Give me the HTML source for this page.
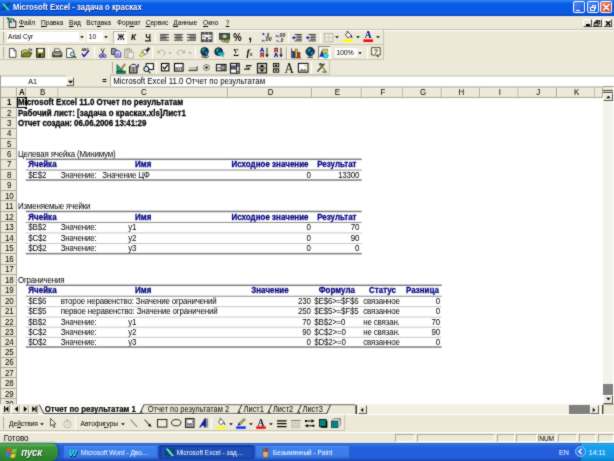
<!DOCTYPE html>
<html lang="ru"><head><meta charset="utf-8"><title>Microsoft Excel - задача о красках</title>
<style>
html,body{margin:0;padding:0;background:#ece9d8;overflow:hidden;}
#scr{filter:url(#soft);position:relative;width:614px;height:461px;overflow:hidden;background:#ece9d8;font-family:"Liberation Sans",sans-serif;font-size:7.95px;color:#000;}
#scr div{position:absolute;box-sizing:border-box;}
#scr svg{position:absolute;overflow:visible;}
.t{white-space:nowrap;line-height:10px;height:10px;letter-spacing:-0.17px;transform:scaleY(1.12);transform-origin:0 55%;}
.b{font-weight:bold;letter-spacing:0.03px;-webkit-text-stroke:0.25px #000;}
.h{font-weight:bold;color:#000080;letter-spacing:0.05px;-webkit-text-stroke:0.25px #000080;}
.m{font-size:6.6px;line-height:9px;height:9px;white-space:nowrap;}
.rh{background:#ece9d8;border-right:1px solid #aca899;border-bottom:1px solid #aca899;text-align:center;line-height:10.4px;font-size:7.95px;}
.ch{background:#ece9d8;border-right:1px solid #aca899;border-bottom:1px solid #aca899;text-align:center;line-height:10px;font-size:7.95px;}
.sep{background:#aca899;border-right:1px solid #fff;}
.hd{border-left:1px solid #fff;border-right:1px solid #aca899;}

</style></head>
<body>
<svg width="0" height="0" style="position:absolute"><defs><filter id="soft" x="0" y="0" width="100%" height="100%" color-interpolation-filters="sRGB"><feConvolveMatrix order="3" kernelMatrix="1 2 1 2 16 2 1 2 1" divisor="28" edgeMode="duplicate" preserveAlpha="true"/></filter></defs></svg>
<div id="scr">
<div style="left:0.00px;top:0.00px;width:614.00px;height:15.60px;background:linear-gradient(to bottom,#1a6cf0 0%,#3a8af8 5%,#1a6eee 12%,#0a5ee6 22%,#0858e2 50%,#0a5ce8 75%,#0a58e0 88%,#0446c4 95%,#023aa8 100%);"></div>
<svg style="left:1.4px;top:3.4px" width="9.4" height="8" viewBox="0 0 9.4 8"><path d="M6.6 0.3 H9.2 V1.1 H8.2 L2.6 7 H0.3 V6.2 H1.2 Z" fill="#0a5c52" stroke="#022" stroke-width="0.3"/><path d="M0.3 0.3 H3 L8.4 6.4 H9.2 V7.4 H6.6 L1.2 1.2 H0.3 Z" fill="#4ae6d6" stroke="#033" stroke-width="0.35"/></svg>
<div class="t" style="left:13.00px;top:2.00px;font-weight:bold;color:#fff;font-size:8.7px;line-height:11px;height:11px;text-shadow:0.5px 0.5px 0 #0a246a;letter-spacing:0;transform:scaleX(0.891);transform-origin:0 0;">Microsoft Excel - задача о красках</div>
<div style="left:572.60px;top:1.40px;width:12.20px;height:12.10px;border-radius:1.8px;border:0.8px solid #fff;background:linear-gradient(135deg,#4c8bf5,#1f56d6);"><div style="left:2.6px;top:7.2px;width:4.2px;height:1.6px;background:#fff"></div></div>
<div style="left:586.50px;top:1.40px;width:12.20px;height:12.10px;border-radius:1.8px;border:0.8px solid #fff;background:linear-gradient(135deg,#4c8bf5,#1f56d6);"><div style="left:4.2px;top:2.6px;width:4.8px;height:4.2px;border:0.8px solid #fff;border-top-width:1.4px"></div><div style="left:2.4px;top:4.6px;width:4.8px;height:4.2px;border:0.8px solid #fff;border-top-width:1.4px;background:#3069e0"></div></div>
<div style="left:600.30px;top:1.40px;width:12.20px;height:12.10px;border-radius:1.8px;border:0.8px solid #fff;background:linear-gradient(135deg,#e88b6c,#c43a1a);"><svg style="left:0;top:0" width="10.6" height="10.5" viewBox="0 0 10.6 10.5"><path d="M2.6 2.6 L8 8 M8 2.6 L2.6 8" stroke="#fff" stroke-width="1.5" stroke-linecap="round"/></svg></div>
<div style="left:0.00px;top:15.50px;width:614.00px;height:14.00px;background:#ece9d8;border-bottom:1px solid #c5c2b2;"></div>
<div style="left:0.00px;top:29.60px;width:614.00px;height:0.80px;background:#fff;"></div>
<div style="left:3.20px;top:17.00px;width:0.90px;height:11.50px;background:#fff;border-right:0.5px solid #aca899;"></div>
<svg style="left:6px;top:17px" width="11" height="12" viewBox="0 0 11 12"><path d="M3.2 2.2 L7.6 2.2 L9.8 4.4 L9.8 10.6 L3.2 10.6 Z" fill="#fff" stroke="#000" stroke-width="0.9"/><path d="M7.4 2.2 V4.6 H9.8" fill="none" stroke="#000" stroke-width="0.7"/><path d="M4.6 7 H8.4 M4.6 8.8 H8.4" stroke="#888" stroke-width="0.5"/><path d="M0.6 0.8 L2.6 0.8 L6.4 5.6 L4.4 5.6 Z" fill="#0a4a44" stroke="#012" stroke-width="0.3"/><path d="M6.2 0.8 L4.4 0.8 L0.8 5.6 L2.6 5.6 Z" fill="#2cc0a8"/></svg>
<div class="m" style="left:19.00px;top:18.20px;"><u>Ф</u>айл</div>
<div class="m" style="left:41.00px;top:18.20px;"><u>П</u>равка</div>
<div class="m" style="left:69.00px;top:18.20px;"><u>В</u>ид</div>
<div class="m" style="left:86.30px;top:18.20px;">Вст<u>а</u>вка</div>
<div class="m" style="left:117.00px;top:18.20px;">Фор<u>м</u>ат</div>
<div class="m" style="left:145.70px;top:18.20px;"><u>С</u>ервис</div>
<div class="m" style="left:173.30px;top:18.20px;"><u>Д</u>анные</div>
<div class="m" style="left:203.00px;top:18.20px;"><u>О</u>кно</div>
<div class="m" style="left:225.70px;top:18.20px;"><u>?</u></div>
<div style="left:583.20px;top:18.60px;width:8.60px;height:8.30px;background:#ece9d8;border-top:0.7px solid #fff;border-left:0.7px solid #fff;border-right:0.9px solid #404040;border-bottom:0.9px solid #404040;"><div style="left:1.4px;top:4.8px;width:4px;height:1.4px;background:#000"></div></div>
<div style="left:592.40px;top:18.60px;width:9.60px;height:8.30px;background:#ece9d8;border-top:0.7px solid #fff;border-left:0.7px solid #fff;border-right:0.9px solid #404040;border-bottom:0.9px solid #404040;"><svg style="left:0;top:0" width="8" height="7" viewBox="0 0 8 7"><rect x="3" y="0.9" width="3.8" height="3" fill="none" stroke="#000" stroke-width="0.8"/><path d="M3 1 H6.8" stroke="#000" stroke-width="1.2"/><rect x="1.2" y="2.8" width="3.8" height="3" fill="#ece9d8" stroke="#000" stroke-width="0.8"/><path d="M1.2 2.9 H5" stroke="#000" stroke-width="1.2"/></svg></div>
<div style="left:602.60px;top:18.60px;width:9.80px;height:8.30px;background:#ece9d8;border-top:0.7px solid #fff;border-left:0.7px solid #fff;border-right:0.9px solid #404040;border-bottom:0.9px solid #404040;"><svg style="left:0;top:0" width="8" height="7" viewBox="0 0 8 7"><path d="M2 1.2 L6.2 5.6 M6.2 1.2 L2 5.6" stroke="#000" stroke-width="1.4"/></svg></div>
<div style="left:0.00px;top:30.40px;width:383.50px;height:14.20px;border-right:1px solid #c8c5b4;border-bottom:1px solid #c8c5b4;"></div>
<div style="left:3.40px;top:32.40px;width:0.90px;height:10.20px;background:#fff;border-right:0.5px solid #aca899;"></div>
<div style="left:0.00px;top:45.00px;width:383.50px;height:15.00px;border-right:1px solid #c8c5b4;border-bottom:1px solid #c8c5b4;"></div>
<div style="left:3.40px;top:47.00px;width:0.90px;height:11.00px;background:#fff;border-right:0.5px solid #aca899;"></div>
<div style="left:109.60px;top:60.40px;width:220.00px;height:15.00px;border-right:1px solid #c8c5b4;border-bottom:1px solid #c8c5b4;"></div>
<div style="left:111.60px;top:62.40px;width:0.90px;height:11.00px;background:#fff;border-right:0.5px solid #aca899;"></div>
<div style="left:6.50px;top:31.60px;width:78.20px;height:10.20px;background:#fff;"></div>
<div style="left:78.60px;top:32.20px;width:5.80px;height:9.00px;background:#f1efe2;"></div>
<div class="m" style="left:8.00px;top:32.40px;">Arial Cyr</div>
<svg style="left:79.50px;top:36.20px" width="4" height="2.4" viewBox="0 0 4 2.4"><path d="M0.2 0.2 H3.8 L2 2.2 Z" fill="#000"/></svg>
<div style="left:87.00px;top:31.60px;width:22.30px;height:10.20px;background:#fff;"></div>
<div style="left:103.40px;top:32.20px;width:5.60px;height:9.00px;background:#f1efe2;"></div>
<div class="m" style="left:88.80px;top:32.40px;">10</div>
<svg style="left:104.20px;top:36.20px" width="4" height="2.4" viewBox="0 0 4 2.4"><path d="M0.2 0.2 H3.8 L2 2.2 Z" fill="#000"/></svg>
<div style="left:113.00px;top:31.00px;width:13.60px;height:12.60px;background:#f8f7f2;border-top:0.8px solid #b9b6a6;border-left:0.8px solid #b9b6a6;border-right:0.8px solid #fff;border-bottom:0.8px solid #fff;"></div>
<div class="t" style="left:117.40px;top:33.40px;font-weight:bold;font-size:7.6px;line-height:10px;height:10px;">Ж</div>
<div class="t" style="left:131.00px;top:33.20px;font-weight:bold;font-style:italic;font-size:8px;line-height:10px;height:10px;">К</div>
<div class="t" style="left:145.40px;top:33.00px;font-weight:bold;font-size:7.6px;line-height:10px;height:8.4px;border-bottom:0.9px solid #000;">Ч</div>
<div style="left:154.50px;top:32.40px;width:1.40px;height:10.60px;background:#aca899;border-right:0.7px solid #fff;"></div>
<svg style="left:160.00px;top:33.90px" width="9" height="8" viewBox="0 0 9 8"><rect x="0.00" y="0.00" width="9" height="1.12" fill="#505050"/><rect x="0.00" y="1.42" width="6.5" height="1.12" fill="#505050"/><rect x="0.00" y="2.84" width="9" height="1.12" fill="#505050"/><rect x="0.00" y="4.26" width="6.5" height="1.12" fill="#505050"/><rect x="0.00" y="5.68" width="9" height="1.12" fill="#505050"/></svg>
<svg style="left:174.00px;top:33.90px" width="9" height="8" viewBox="0 0 9 8"><rect x="0.00" y="0.00" width="9" height="1.12" fill="#505050"/><rect x="1.50" y="1.42" width="6" height="1.12" fill="#505050"/><rect x="0.00" y="2.84" width="9" height="1.12" fill="#505050"/><rect x="1.50" y="4.26" width="6" height="1.12" fill="#505050"/><rect x="0.00" y="5.68" width="9" height="1.12" fill="#505050"/></svg>
<svg style="left:187.20px;top:33.90px" width="9" height="8" viewBox="0 0 9 8"><rect x="0.00" y="0.00" width="9" height="1.12" fill="#505050"/><rect x="2.50" y="1.42" width="6.5" height="1.12" fill="#505050"/><rect x="0.00" y="2.84" width="9" height="1.12" fill="#505050"/><rect x="2.50" y="4.26" width="6.5" height="1.12" fill="#505050"/><rect x="0.00" y="5.68" width="9" height="1.12" fill="#505050"/></svg>
<svg style="left:200.60px;top:32.40px" width="11.4" height="10" viewBox="0 0 11.4 10"><rect x="0.4" y="0.4" width="10.6" height="9.2" fill="#fff" stroke="#222" stroke-width="0.9"/><rect x="0.4" y="0.4" width="10.6" height="2.4" fill="#555"/><rect x="0.4" y="7.2" width="10.6" height="2.4" fill="#555"/><path d="M3.8 0.4 V2.8 M7.6 0.4 V2.8 M3.8 7.2 V9.6 M7.6 7.2 V9.6" stroke="#ddd" stroke-width="0.6"/><path d="M1.4 5 H4.2 M10.6 5 H7.8" stroke="#222" stroke-width="0.8"/><text x="6" y="6.6" font-size="4.4" font-family="Liberation Sans,sans-serif" font-weight="bold" text-anchor="middle" fill="#000">a</text></svg>
<div style="left:214.50px;top:32.40px;width:1.40px;height:10.60px;background:#aca899;border-right:0.7px solid #fff;"></div>
<svg style="left:218.60px;top:32.60px" width="11.4" height="9.6" viewBox="0 0 11.4 9.6"><rect x="0.6" y="0.6" width="10" height="5.6" fill="#4a5a4a" stroke="#222" stroke-width="0.8"/><ellipse cx="5.6" cy="3.4" rx="2" ry="1.7" fill="#bdb"/><ellipse cx="4.6" cy="7.6" rx="2.2" ry="1.2" fill="#cc3" stroke="#222" stroke-width="0.6"/><ellipse cx="8" cy="8.2" rx="2.2" ry="1.2" fill="#cc3" stroke="#222" stroke-width="0.6"/></svg>
<div class="t" style="left:233.20px;top:33.40px;font-weight:bold;font-size:9.4px;line-height:10px;height:10px;letter-spacing:0;">%</div>
<div class="t" style="left:248.60px;top:31.20px;font-weight:bold;font-size:12.5px;line-height:10px;height:10px;">,</div>
<svg style="left:261.00px;top:32.60px" width="10" height="10" viewBox="0 0 10 10"><path d="M1.2 1 H3.6 M2.4 0 V2.2" stroke="#00c" stroke-width="0.8"/><path d="M0.6 8.2 H3 L1.8 6.6 Z" fill="#00c"/><text x="3.2" y="8.2" font-size="5.4" font-family="Liberation Sans,sans-serif" font-style="italic" font-weight="bold" fill="#222">,00</text><text x="4.6" y="4.2" font-size="4.6" font-family="Liberation Sans,sans-serif" font-style="italic" font-weight="bold" fill="#222">,0</text></svg>
<svg style="left:274.60px;top:32.60px" width="10" height="10" viewBox="0 0 10 10"><path d="M0.4 3.4 H3 L1.7 1.8 Z" fill="#00c"/><path d="M1.2 8 H3.6" stroke="#00c" stroke-width="0.8"/><text x="3" y="4.4" font-size="5.4" font-family="Liberation Sans,sans-serif" font-style="italic" font-weight="bold" fill="#222">,00</text><text x="4.6" y="8.8" font-size="4.6" font-family="Liberation Sans,sans-serif" font-style="italic" font-weight="bold" fill="#222">,0</text></svg>
<div style="left:287.50px;top:32.40px;width:1.40px;height:10.60px;background:#aca899;border-right:0.7px solid #fff;"></div>
<svg style="left:292.00px;top:33.80px" width="10" height="8" viewBox="0 0 10 8"><rect x="2.6" y="0.00" width="7.2" height="0.95" fill="#333"/><rect x="4.4" y="1.60" width="5.4" height="0.95" fill="#333"/><rect x="4.4" y="3.20" width="5.4" height="0.95" fill="#333"/><rect x="4.4" y="4.80" width="5.4" height="0.95" fill="#333"/><rect x="2.6" y="6.40" width="7.2" height="0.95" fill="#333"/><path d="M0 3.7 L2.4 1.9 V5.5 Z" fill="#00c"/><path d="M2 3.7 H4" stroke="#00c" stroke-width="0.9"/></svg>
<svg style="left:306.00px;top:33.80px" width="10" height="8" viewBox="0 0 10 8"><rect x="2.6" y="0.00" width="7.2" height="0.95" fill="#333"/><rect x="4.4" y="1.60" width="5.4" height="0.95" fill="#333"/><rect x="4.4" y="3.20" width="5.4" height="0.95" fill="#333"/><rect x="4.4" y="4.80" width="5.4" height="0.95" fill="#333"/><rect x="2.6" y="6.40" width="7.2" height="0.95" fill="#333"/><path d="M3.8 3.7 L1.4 1.9 V5.5 Z" fill="#00c"/><path d="M0 3.7 H2" stroke="#00c" stroke-width="0.9"/></svg>
<div style="left:319.50px;top:32.40px;width:1.40px;height:10.60px;background:#aca899;border-right:0.7px solid #fff;"></div>
<svg style="left:324.00px;top:33.00px" width="9.4" height="9.4" viewBox="0 0 9.4 9.4"><rect x="0.5" y="0.5" width="8.4" height="8.4" fill="none" stroke="#b5b2a2" stroke-width="0.9"/><path d="M4.7 0.5 V8.9 M0.5 4.7 H8.9" stroke="#c8c5b6" stroke-width="0.8"/></svg>
<svg style="left:335.40px;top:36.40px" width="4" height="2.4" viewBox="0 0 4 2.4"><path d="M0.2 0.2 H3.8 L2 2.2 Z" fill="#000"/></svg>
<svg style="left:343.20px;top:30.80px" width="10.4" height="11.4" viewBox="0 0 10.4 11.4"><path d="M2.4 3.6 L5.4 1.2 L8.4 4.4 L5 7 Z" fill="#fff" stroke="#222" stroke-width="0.8"/><path d="M3.4 1.2 C3.4 -0.2 5.6 -0.2 5.4 2" fill="none" stroke="#222" stroke-width="0.7"/><path d="M8 4.2 C9.4 4.6 9.4 6.4 9 7.4 C8.2 6.6 7.6 5.4 8 4.2Z" fill="#00a"/><rect x="0.4" y="8.4" width="9.6" height="2.6" fill="#ff0"/></svg>
<svg style="left:355.60px;top:36.40px" width="4" height="2.4" viewBox="0 0 4 2.4"><path d="M0.2 0.2 H3.8 L2 2.2 Z" fill="#000"/></svg>
<svg style="left:363.00px;top:30.80px" width="10.4" height="11.4" viewBox="0 0 10.4 11.4"><text x="5.2" y="7.4" font-size="9.4" font-family="Liberation Serif,serif" font-weight="bold" text-anchor="middle" fill="#000080">A</text><rect x="0.4" y="8.4" width="9.6" height="2.6" fill="#f00"/></svg>
<svg style="left:376.00px;top:36.40px" width="4" height="2.4" viewBox="0 0 4 2.4"><path d="M0.2 0.2 H3.8 L2 2.2 Z" fill="#000"/></svg>
<svg style="left:8.80px;top:47.80px" width="7.6" height="10" viewBox="0 0 7.6 10"><path d="M0.5 0.5 H4.8 L7 2.8 V9.4 H0.5 Z" fill="#fff" stroke="#222" stroke-width="0.8"/><path d="M4.8 0.5 V2.8 H7" fill="none" stroke="#222" stroke-width="0.7"/></svg>
<svg style="left:20.60px;top:48.00px" width="11.6" height="9.6" viewBox="0 0 11.6 9.6"><path d="M0.5 9 V3 H2 L2.8 2 H5.4 L6.2 3 H8.6 V4.6" fill="#e8e070" stroke="#222" stroke-width="0.7"/><path d="M0.5 9 L2.6 4.8 H11 L8.8 9 Z" fill="#8a8a10" stroke="#222" stroke-width="0.7"/><path d="M7 1.6 C8.4 0.2 10 0.6 10.4 2.2 M10.6 0.8 V2.4 H9" fill="none" stroke="#222" stroke-width="0.7"/></svg>
<svg style="left:35.60px;top:47.80px" width="9" height="9.8" viewBox="0 0 9 9.8"><rect x="0.5" y="0.5" width="8" height="8.8" fill="#7a7a10" stroke="#111" stroke-width="0.8"/><rect x="2" y="0.9" width="5" height="3.6" fill="#fff"/><rect x="2.4" y="6" width="4.2" height="3.2" fill="#222"/><rect x="5.2" y="6.6" width="1" height="2" fill="#ddd"/></svg>
<div style="left:47.50px;top:47.00px;width:1.40px;height:11.60px;background:#aca899;border-right:0.7px solid #fff;"></div>
<svg style="left:52.00px;top:47.60px" width="10.4" height="10" viewBox="0 0 10.4 10"><path d="M2.6 4 V0.8 H7 L8 1.8 V4" fill="#fff" stroke="#222" stroke-width="0.7"/><path d="M0.5 7.6 V4.6 L1.8 3.6 H8.8 L9.9 4.6 V7.6 Z" fill="#8a8a8a" stroke="#222" stroke-width="0.7"/><path d="M0.5 7.6 H9.9 V9 H0.5 Z" fill="#555" stroke="#222" stroke-width="0.6"/><rect x="2.6" y="6.4" width="5" height="0.9" fill="#ee3"/></svg>
<svg style="left:65.60px;top:47.60px" width="10.6" height="10.4" viewBox="0 0 10.6 10.4"><path d="M0.6 0.5 H5.6 L7.6 2.6 V9.6 H0.6 Z" fill="#fff" stroke="#222" stroke-width="0.8"/><circle cx="6.4" cy="6.2" r="2.1" fill="#aee" stroke="#222" stroke-width="0.7"/><path d="M8 7.8 L10 10" stroke="#222" stroke-width="1.2"/></svg>
<svg style="left:80.00px;top:47.20px" width="10.4" height="10.6" viewBox="0 0 10.4 10.6"><text x="1.4" y="3.6" font-size="3.6" font-family="Liberation Sans,sans-serif" font-weight="bold" fill="#222">ABC</text><path d="M2 6.6 L4 9.4 L9 3.4" fill="none" stroke="#00a" stroke-width="1.3"/></svg>
<div style="left:93.50px;top:47.00px;width:1.40px;height:11.60px;background:#aca899;border-right:0.7px solid #fff;"></div>
<svg style="left:99.00px;top:47.60px" width="7.4" height="10.4" viewBox="0 0 7.4 10.4"><path d="M2 0.4 L4.6 6 M5.4 0.4 L2.8 6" stroke="#222" stroke-width="0.8"/><circle cx="2" cy="8" r="1.5" fill="none" stroke="#00a" stroke-width="0.9"/><circle cx="5.4" cy="8" r="1.5" fill="none" stroke="#00a" stroke-width="0.9"/></svg>
<svg style="left:110.80px;top:47.80px" width="10.6" height="9.6" viewBox="0 0 10.6 9.6"><path d="M0.5 0.5 H4.2 L5.6 2 V6.4 H0.5 Z" fill="#9a9a9a" stroke="#222" stroke-width="0.8"/><path d="M4 2.8 H8 L9.8 4.6 V9 H4 Z" fill="#fff" stroke="#00a" stroke-width="0.8"/><path d="M5 5.2 H8.6 M5 6.6 H8.6 M5 7.8 H8.6" stroke="#338" stroke-width="0.6"/></svg>
<svg style="left:124.00px;top:47.60px" width="10.4" height="10.4" viewBox="0 0 10.4 10.4"><rect x="0.6" y="1.4" width="7" height="8" fill="#d8d5c6" stroke="#a09d8e" stroke-width="0.8"/><rect x="2.4" y="0.4" width="3.4" height="1.8" fill="#c0bdae" stroke="#a09d8e" stroke-width="0.5"/><rect x="4" y="4.2" width="5.6" height="5.8" fill="#f2f0e6" stroke="#a09d8e" stroke-width="0.7"/></svg>
<svg style="left:138.60px;top:47.40px" width="11.4" height="10.6" viewBox="0 0 11.4 10.6"><path d="M6.6 3.4 L9.4 0.4 L11 1.8 L8.2 4.8 Z" fill="#223" stroke="#111" stroke-width="0.5"/><path d="M3.2 4.4 L5.8 2.4 L8.8 5.4 L6.2 7.6 Z" fill="#fff" stroke="#222" stroke-width="0.7"/><path d="M0.4 8.8 L3 4.8 L5.8 7.8 L2.2 9.8 Z" fill="#ee4" stroke="#664" stroke-width="0.5"/></svg>
<div style="left:151.50px;top:47.00px;width:1.40px;height:11.60px;background:#aca899;border-right:0.7px solid #fff;"></div>
<svg style="left:156.60px;top:49.40px" width="9.4" height="6.4" viewBox="0 0 9.4 6.4"><path d="M1.6 2.8 C3.4 0.6 7 0.6 8 3 C8.6 4.6 7.4 5.8 6 6" fill="none" stroke="#b3b0a0" stroke-width="1"/><path d="M0.4 0.8 V4.2 H3.8 Z" fill="#b3b0a0"/></svg>
<svg style="left:168.40px;top:51.80px" width="4" height="2.4" viewBox="0 0 4 2.4"><path d="M0.2 0.2 H3.8 L2 2.2 Z" fill="#b3b0a0"/></svg>
<svg style="left:176.40px;top:49.40px" width="9.4" height="6.4" viewBox="0 0 9.4 6.4"><path d="M7.8 2.8 C6 0.6 2.4 0.6 1.4 3 C0.8 4.6 2 5.8 3.4 6" fill="none" stroke="#b3b0a0" stroke-width="1"/><path d="M9 0.8 V4.2 H5.6 Z" fill="#b3b0a0"/></svg>
<svg style="left:188.40px;top:51.80px" width="4" height="2.4" viewBox="0 0 4 2.4"><path d="M0.2 0.2 H3.8 L2 2.2 Z" fill="#b3b0a0"/></svg>
<div style="left:194.50px;top:47.00px;width:1.40px;height:11.60px;background:#aca899;border-right:0.7px solid #fff;"></div>
<svg style="left:200.40px;top:47.40px" width="10.6" height="11" viewBox="0 0 10.6 11"><circle cx="4.6" cy="4.4" r="3.8" fill="#10309a" stroke="#012" stroke-width="0.8"/><path d="M1.9999999999999996 2.2 q1.6 -1.6 3 -0.6 q0.6 1.4 -0.8 2 q-0.4 1.6 -1.6 1.2 q-1.2 -1 -0.6 -2.6z" fill="#2a3"/><path d="M5.3999999999999995 5.0 q1.6 -0.4 2.2 0.6 q-0.6 1.8 -2 2 z" fill="#2c2"/><ellipse cx="3.8" cy="9.4" rx="2" ry="1.1" fill="none" stroke="#222" stroke-width="0.8"/><ellipse cx="6.4" cy="9.4" rx="2" ry="1.1" fill="none" stroke="#222" stroke-width="0.8"/></svg>
<svg style="left:214.20px;top:47.40px" width="11.4" height="11" viewBox="0 0 11.4 11"><circle cx="4.6" cy="4.6" r="3.9" fill="#10309a" stroke="#012" stroke-width="0.8"/><path d="M1.9999999999999996 2.3999999999999995 q1.6 -1.6 3 -0.6 q0.6 1.4 -0.8 2 q-0.4 1.6 -1.6 1.2 q-1.2 -1 -0.6 -2.6z" fill="#2a3"/><path d="M5.3999999999999995 5.199999999999999 q1.6 -0.4 2.2 0.6 q-0.6 1.8 -2 2 z" fill="#2c2"/><path d="M4 5.4 H10 V8 H8.4 L9.2 10 L7.6 8 H4 Z" fill="#0cc" stroke="#066" stroke-width="0.4"/></svg>
<div class="t" style="left:233.20px;top:47.20px;font-family:'Liberation Serif',serif;font-size:9.8px;line-height:11px;height:11px;transform:none;">Σ</div>
<div class="t" style="left:246.40px;top:47.20px;font-family:'Liberation Serif',serif;font-weight:bold;font-style:italic;font-size:9.6px;line-height:11px;height:11px;transform:none;">f</div>
<div class="t" style="left:249.80px;top:50.60px;font-family:'Liberation Serif',serif;font-weight:bold;font-style:italic;font-size:5.4px;line-height:6px;height:6px;">x</div>
<svg style="left:260.00px;top:47.40px" width="9.6" height="11" viewBox="0 0 9.6 11"><text x="0" y="4.8" font-size="5.8" font-weight="bold" font-family="Liberation Sans,sans-serif" fill="#0000a0" stroke="#0000a0" stroke-width="0.3">А</text><text x="0" y="10.4" font-size="5.8" font-weight="bold" font-family="Liberation Sans,sans-serif" fill="#900" stroke="#900" stroke-width="0.3">Я</text><path d="M7 0.8 V8.4" stroke="#111" stroke-width="0.9"/><path d="M5.2 7.6 H8.8 L7 10.4 Z" fill="#111"/></svg>
<svg style="left:274.00px;top:47.40px" width="9.6" height="11" viewBox="0 0 9.6 11"><text x="0" y="4.8" font-size="5.8" font-weight="bold" font-family="Liberation Sans,sans-serif" fill="#900" stroke="#900" stroke-width="0.3">Я</text><text x="0" y="10.4" font-size="5.8" font-weight="bold" font-family="Liberation Sans,sans-serif" fill="#0000a0" stroke="#0000a0" stroke-width="0.3">А</text><path d="M7 0.8 V8.4" stroke="#111" stroke-width="0.9"/><path d="M5.2 7.6 H8.8 L7 10.4 Z" fill="#111"/></svg>
<div style="left:286.30px;top:47.00px;width:1.40px;height:11.60px;background:#aca899;border-right:0.7px solid #fff;"></div>
<svg style="left:290.60px;top:47.60px" width="10.4" height="10.4" viewBox="0 0 10.4 10.4"><path d="M0.6 0.4 V9.8 H10" fill="none" stroke="#222" stroke-width="0.8"/><rect x="1.6" y="3.4" width="2.2" height="6" fill="#22b" stroke="#111" stroke-width="0.4"/><rect x="4.2" y="1" width="2.2" height="8.4" fill="#dd2" stroke="#111" stroke-width="0.4"/><rect x="6.8" y="4.4" width="2.2" height="5" fill="#d22" stroke="#111" stroke-width="0.4"/></svg>
<svg style="left:305.00px;top:47.20px" width="10.6" height="11.2" viewBox="0 0 10.6 11.2"><circle cx="5.2" cy="4.6" r="4.2" fill="#10309a" stroke="#012" stroke-width="0.8"/><path d="M2.6 2.3999999999999995 q1.6 -1.6 3 -0.6 q0.6 1.4 -0.8 2 q-0.4 1.6 -1.6 1.2 q-1.2 -1 -0.6 -2.6z" fill="#2a3"/><path d="M6.0 5.199999999999999 q1.6 -0.4 2.2 0.6 q-0.6 1.8 -2 2 z" fill="#2c2"/><path d="M5.2 8.8 V10 M2.6 10.4 H7.8" stroke="#552" stroke-width="1.1"/></svg>
<div style="left:317.60px;top:46.40px;width:13.00px;height:12.60px;background:#f6f5ef;border-top:0.8px solid #8a8778;border-left:0.8px solid #8a8778;border-right:0.8px solid #fff;border-bottom:0.8px solid #fff;"></div>
<svg style="left:319.40px;top:47.60px" width="10.4" height="10.8" viewBox="0 0 10.4 10.8"><path d="M3.6 1.2 L8.6 1.2 L7.6 5.6 L2.6 5.6 Z" fill="#dc3" stroke="#443" stroke-width="0.5"/><circle cx="6.6" cy="7.6" r="2.6" fill="#3de" stroke="#167" stroke-width="0.5"/><path d="M0.6 8.6 L3 3 L4.4 8.6 Z" fill="#22a" stroke="#115" stroke-width="0.4"/></svg>
<div style="left:334.60px;top:48.00px;width:28.80px;height:9.00px;background:#fff;"></div>
<div style="left:357.40px;top:48.40px;width:5.80px;height:8.20px;background:#f1efe2;"></div>
<div class="m" style="left:336.20px;top:48.20px;font-size:7px;letter-spacing:-0.1px;">100%</div>
<svg style="left:358.40px;top:51.80px" width="4" height="2.4" viewBox="0 0 4 2.4"><path d="M0.2 0.2 H3.8 L2 2.2 Z" fill="#000"/></svg>
<div style="left:366.50px;top:47.00px;width:1.40px;height:11.60px;background:#aca899;border-right:0.7px solid #fff;"></div>
<svg style="left:370.60px;top:47.40px" width="10" height="10.8" viewBox="0 0 10 10.8"><path d="M0.6 0.6 H9.2 V8 H6 L7.4 10 L4.6 8 H0.6 Z" fill="#ffc" stroke="#222" stroke-width="0.8"/><text x="4.9" y="7" font-size="7.2" font-weight="bold" font-family="Liberation Sans,sans-serif" text-anchor="middle" fill="#22a">?</text></svg>
<svg style="left:115.60px;top:62.60px" width="10" height="11" viewBox="0 0 10 11"><path d="M0.6 8 H9.4 V10.4 H0.6 Z" fill="#086" stroke="#111" stroke-width="0.5"/><path d="M1 7.6 L1 1.6 L6.6 7.6 Z" fill="#0b9" stroke="#111" stroke-width="0.6"/><path d="M4.6 5.8 L8.4 0.8 L9.4 1.6 L5.8 6.8 Z" fill="#db3" stroke="#222" stroke-width="0.5"/></svg>
<svg style="left:129.00px;top:62.80px" width="10.4" height="10.6" viewBox="0 0 10.4 10.6"><rect x="0.6" y="3.8" width="7.4" height="6.2" fill="#b8b5a6" stroke="#000" stroke-width="1"/><path d="M0.6 3.8 L3 1.4 H6 L8 3.8" fill="#fff" stroke="#000" stroke-width="0.9"/><path d="M2.4 6 H6.2 M2.4 7.8 H6.2 M4.3 4.6 V9.4" stroke="#444" stroke-width="0.6"/><path d="M9.2 1 V4.2" stroke="#00c" stroke-width="1.1"/></svg>
<svg style="left:142.60px;top:62.80px" width="11" height="10.8" viewBox="0 0 11 10.8"><rect x="3.2" y="0.6" width="7.2" height="5.8" fill="#fff" stroke="#000" stroke-width="1"/><circle cx="3.4" cy="6" r="2.6" fill="#cef" stroke="#000" stroke-width="1"/><path d="M5.2 7.8 L7.4 10.2" stroke="#222" stroke-width="1.1"/></svg>
<div style="left:156.10px;top:62.20px;width:1.40px;height:11.80px;background:#aca899;border-right:0.7px solid #fff;"></div>
<svg style="left:161.00px;top:63.40px" width="8.4" height="8.4" viewBox="0 0 8.4 8.4"><rect x="0.5" y="0.5" width="7.4" height="7.4" fill="#fff" stroke="#000" stroke-width="1.1"/><path d="M1.8 3.6 L3.6 6 L6.6 1.8" fill="none" stroke="#000" stroke-width="1.2"/></svg>
<svg style="left:174.00px;top:63.40px" width="9.6" height="8.6" viewBox="0 0 9.6 8.6"><rect x="0.5" y="0.5" width="8.6" height="7.6" fill="#fff" stroke="#000" stroke-width="1.1"/><text x="4.8" y="6.6" font-size="5.6" font-family="Liberation Sans,sans-serif" font-weight="bold" text-anchor="middle" fill="#333">ил</text></svg>
<svg style="left:188.00px;top:66.20px" width="9.4" height="5" viewBox="0 0 9.4 5"><rect x="0.3" y="0.3" width="8.8" height="4.4" fill="#c4c1b2"/><path d="M0.3 4.7 V0.3 H9.1" fill="none" stroke="#fff" stroke-width="0.7"/><path d="M0.3 4.6 H9.1 V0.3" fill="none" stroke="#333" stroke-width="1"/></svg>
<svg style="left:203.00px;top:64.40px" width="7" height="7" viewBox="0 0 7 7"><circle cx="3.5" cy="3.5" r="2.9" fill="#fff" stroke="#555" stroke-width="0.9"/><circle cx="3.5" cy="3.5" r="1.2" fill="#000"/></svg>
<svg style="left:215.60px;top:64.20px" width="10.4" height="7.2" viewBox="0 0 10.4 7.2"><rect x="0.4" y="0.4" width="9.6" height="6.4" fill="#fff" stroke="#000" stroke-width="1"/><text x="2.6" y="5.2" font-size="4.2" font-family="Liberation Sans,sans-serif" fill="#222" text-anchor="middle">ab</text><rect x="5" y="1.4" width="4" height="4.4" fill="#999" stroke="#222" stroke-width="0.6"/></svg>
<svg style="left:229.80px;top:62.60px" width="9.6" height="10.6" viewBox="0 0 9.6 10.6"><rect x="0.4" y="0.4" width="8.8" height="9.8" fill="#fff" stroke="#000" stroke-width="1"/><path d="M0.4 3 H9.2 M0.4 6 H6.6 M6.6 0.4 V10.2" stroke="#000" stroke-width="0.9"/><rect x="1" y="3.4" width="5.2" height="2.2" fill="#447"/><path d="M7.2 1.8 H8.6 M7.2 8.4 H8.6" stroke="#000" stroke-width="0.8"/></svg>
<svg style="left:244.40px;top:64.40px" width="8" height="7" viewBox="0 0 8 7"><path d="M2.4 1.6 H7.6 M0.2 5.2 H5.4" stroke="#111" stroke-width="1.3"/><path d="M2.8 1 V3.6 M5 3.2 V5.8" stroke="#111" stroke-width="1"/></svg>
<svg style="left:257.00px;top:62.80px" width="10" height="10.4" viewBox="0 0 10 10.4"><rect x="0.4" y="0.4" width="9.2" height="9.6" fill="#c8c5b6" stroke="#000" stroke-width="1"/><path d="M5 1.4 L7.4 4 H2.6 Z M5 9 L7.4 6.4 H2.6 Z" fill="#000"/><rect x="1.6" y="4.4" width="6.8" height="1.6" fill="#667"/></svg>
<svg style="left:273.20px;top:63.40px" width="6.2" height="9.6" viewBox="0 0 6.2 9.6"><rect x="0.4" y="0.4" width="5.4" height="3.4" fill="#d8d5c6" stroke="#000" stroke-width="0.9"/><rect x="0.4" y="5.8" width="5.4" height="3.4" fill="#d8d5c6" stroke="#000" stroke-width="0.9"/><path d="M3.1 1 L4.6 3 H1.6 Z M3.1 8.6 L4.6 6.6 H1.6 Z" fill="#000"/></svg>
<div class="t" style="left:284.60px;top:61.60px;font-family:'Liberation Serif',serif;font-size:13px;line-height:13px;height:13px;">A</div>
<svg style="left:298.00px;top:63.00px" width="10.4" height="9.6" viewBox="0 0 10.4 9.6"><rect x="0.4" y="0.4" width="9.6" height="8.8" fill="#fff" stroke="#000" stroke-width="1"/><path d="M1 8.6 L3.6 5.4 L5.4 7 L7 5.8 L9.4 8.6 Z" fill="#777"/><circle cx="7.2" cy="2.8" r="1" fill="#cc2"/></svg>
<div style="left:311.10px;top:62.20px;width:1.40px;height:11.80px;background:#aca899;border-right:0.7px solid #fff;"></div>
<svg style="left:315.60px;top:62.40px" width="11.4" height="11" viewBox="0 0 11.4 11"><path d="M1.4 9.6 L8.4 1.6" stroke="#222" stroke-width="1.3"/><path d="M2.6 2.8 L5 0.8 L7.4 3.6 L6 4.8 Z" fill="#333"/><path d="M3 1.4 L9.6 9" stroke="#883" stroke-width="1.2"/><path d="M6.4 10 H10.8" stroke="#222" stroke-width="1"/></svg>
<div style="left:0.00px;top:76.00px;width:66.00px;height:10.20px;background:#fff;"></div>
<div class="t" style="left:28.30px;top:77.30px;font-size:7.2px;line-height:9.5px;">A1</div>
<div style="left:66.00px;top:76.60px;width:8.40px;height:9.40px;background:#ece9d8;border-top:0.7px solid #fff;border-left:0.7px solid #fff;border-right:0.9px solid #5c5a50;border-bottom:0.9px solid #5c5a50;"><svg style="left:0;top:0" width="7" height="8" viewBox="0 0 7 8"><path d="M1 2.8 H6 L3.5 5.6 Z" fill="#000"/></svg></div>
<div class="t" style="left:102.20px;top:77.00px;font-weight:bold;font-size:7.6px;line-height:9.5px;">=</div>
<div style="left:110.00px;top:76.00px;width:504.00px;height:10.00px;background:#fff;border-left:0.8px solid #b0ad9c;"></div>
<div class="t" style="left:113.30px;top:77.00px;font-size:7.87px;line-height:9.8px;letter-spacing:0;">Microsoft Excel 11.0 Отчет по результатам</div>
<div style="left:0.00px;top:86.20px;width:614.00px;height:0.90px;background:#c9c6b5;"></div>
<div style="left:0.00px;top:86.80px;width:603.00px;height:318.40px;background:#fff;"></div>
<div style="left:0.00px;top:86.40px;width:603.00px;height:11.40px;background:#ece9d8;"></div>
<div class="t" style="left:-78.05px;width:200px;text-align:center;top:88.00px;font-weight:bold;letter-spacing:0;">A</div>
<div class="t" style="left:-57.25px;width:200px;text-align:center;top:88.00px;letter-spacing:0;">B</div>
<div class="t" style="left:43.75px;width:200px;text-align:center;top:88.00px;letter-spacing:0;">C</div>
<div class="t" style="left:170.50px;width:200px;text-align:center;top:88.00px;letter-spacing:0;">D</div>
<div class="t" style="left:237.35px;width:200px;text-align:center;top:88.00px;letter-spacing:0;">E</div>
<div class="t" style="left:283.00px;width:200px;text-align:center;top:88.00px;letter-spacing:0;">F</div>
<div class="t" style="left:323.00px;width:200px;text-align:center;top:88.00px;letter-spacing:0;">G</div>
<div class="t" style="left:361.40px;width:200px;text-align:center;top:88.00px;letter-spacing:0;">H</div>
<div class="t" style="left:399.80px;width:200px;text-align:center;top:88.00px;letter-spacing:0;">I</div>
<div class="t" style="left:438.20px;width:200px;text-align:center;top:88.00px;letter-spacing:0;">J</div>
<div class="t" style="left:476.60px;width:200px;text-align:center;top:88.00px;letter-spacing:0;">K</div>
<div class="rh" style="left:0.00px;top:97.50px;width:16.90px;height:10.37px;"></div>
<div class="t" style="left:-90.80px;width:200px;text-align:center;top:98.00px;font-weight:bold;">1</div>
<div class="rh" style="left:0.00px;top:107.87px;width:16.90px;height:10.34px;"></div>
<div class="t" style="left:-90.80px;width:200px;text-align:center;top:109.00px;">2</div>
<div class="rh" style="left:0.00px;top:118.21px;width:16.90px;height:10.34px;"></div>
<div class="t" style="left:-90.80px;width:200px;text-align:center;top:119.00px;">3</div>
<div class="rh" style="left:0.00px;top:128.56px;width:16.90px;height:10.34px;"></div>
<div class="t" style="left:-90.80px;width:200px;text-align:center;top:129.00px;">4</div>
<div class="rh" style="left:0.00px;top:138.90px;width:16.90px;height:10.34px;"></div>
<div class="t" style="left:-90.80px;width:200px;text-align:center;top:140.00px;">5</div>
<div class="rh" style="left:0.00px;top:149.24px;width:16.90px;height:10.34px;"></div>
<div class="t" style="left:-90.80px;width:200px;text-align:center;top:150.00px;">6</div>
<div class="rh" style="left:0.00px;top:159.59px;width:16.90px;height:10.34px;"></div>
<div class="t" style="left:-90.80px;width:200px;text-align:center;top:160.00px;">7</div>
<div class="rh" style="left:0.00px;top:169.93px;width:16.90px;height:10.41px;"></div>
<div class="t" style="left:-90.80px;width:200px;text-align:center;top:171.00px;">8</div>
<div class="rh" style="left:0.00px;top:180.34px;width:16.90px;height:10.48px;"></div>
<div class="t" style="left:-90.80px;width:200px;text-align:center;top:181.00px;">9</div>
<div class="rh" style="left:0.00px;top:190.81px;width:16.90px;height:10.48px;"></div>
<div class="t" style="left:-90.80px;width:200px;text-align:center;top:192.00px;">10</div>
<div class="rh" style="left:0.00px;top:201.29px;width:16.90px;height:10.47px;"></div>
<div class="t" style="left:-90.80px;width:200px;text-align:center;top:202.00px;">11</div>
<div class="rh" style="left:0.00px;top:211.76px;width:16.90px;height:10.52px;"></div>
<div class="t" style="left:-90.80px;width:200px;text-align:center;top:213.00px;">12</div>
<div class="rh" style="left:0.00px;top:222.28px;width:16.90px;height:10.56px;"></div>
<div class="t" style="left:-90.80px;width:200px;text-align:center;top:223.00px;">13</div>
<div class="rh" style="left:0.00px;top:232.84px;width:16.90px;height:10.56px;"></div>
<div class="t" style="left:-90.80px;width:200px;text-align:center;top:234.00px;">14</div>
<div class="rh" style="left:0.00px;top:243.40px;width:16.90px;height:10.56px;"></div>
<div class="t" style="left:-90.80px;width:200px;text-align:center;top:244.00px;">15</div>
<div class="rh" style="left:0.00px;top:253.96px;width:16.90px;height:10.56px;"></div>
<div class="t" style="left:-90.80px;width:200px;text-align:center;top:255.00px;">16</div>
<div class="rh" style="left:0.00px;top:264.52px;width:16.90px;height:10.54px;"></div>
<div class="t" style="left:-90.80px;width:200px;text-align:center;top:265.00px;">17</div>
<div class="rh" style="left:0.00px;top:275.06px;width:16.90px;height:10.52px;"></div>
<div class="t" style="left:-90.80px;width:200px;text-align:center;top:276.00px;">18</div>
<div class="rh" style="left:0.00px;top:285.59px;width:16.90px;height:10.53px;"></div>
<div class="t" style="left:-90.80px;width:200px;text-align:center;top:286.00px;">19</div>
<div class="rh" style="left:0.00px;top:296.11px;width:16.90px;height:10.52px;"></div>
<div class="t" style="left:-90.80px;width:200px;text-align:center;top:297.00px;">20</div>
<div class="rh" style="left:0.00px;top:306.64px;width:16.90px;height:10.31px;"></div>
<div class="t" style="left:-90.80px;width:200px;text-align:center;top:307.00px;">21</div>
<div class="rh" style="left:0.00px;top:316.95px;width:16.90px;height:10.10px;"></div>
<div class="t" style="left:-90.80px;width:200px;text-align:center;top:318.00px;">22</div>
<div class="rh" style="left:0.00px;top:327.05px;width:16.90px;height:10.10px;"></div>
<div class="t" style="left:-90.80px;width:200px;text-align:center;top:328.00px;">23</div>
<div class="rh" style="left:0.00px;top:337.15px;width:16.90px;height:10.23px;"></div>
<div class="t" style="left:-90.80px;width:200px;text-align:center;top:338.00px;">24</div>
<div class="rh" style="left:0.00px;top:347.38px;width:16.90px;height:10.35px;"></div>
<div class="t" style="left:-90.80px;width:200px;text-align:center;top:348.00px;">25</div>
<div class="rh" style="left:0.00px;top:357.73px;width:16.90px;height:10.35px;"></div>
<div class="t" style="left:-90.80px;width:200px;text-align:center;top:358.00px;">26</div>
<div class="rh" style="left:0.00px;top:368.07px;width:16.90px;height:10.35px;"></div>
<div class="t" style="left:-90.80px;width:200px;text-align:center;top:369.00px;">27</div>
<div class="rh" style="left:0.00px;top:378.43px;width:16.90px;height:10.38px;"></div>
<div class="t" style="left:-90.80px;width:200px;text-align:center;top:379.00px;">28</div>
<div class="rh" style="left:0.00px;top:388.80px;width:16.90px;height:10.40px;"></div>
<div class="t" style="left:-90.80px;width:200px;text-align:center;top:390.00px;">29</div>
<div class="rh" style="left:0.00px;top:399.20px;width:16.90px;height:10.40px;"></div>
<div class="t" style="left:-90.80px;width:200px;text-align:center;top:400.00px;">30</div>
<div class="t b" style="left:17.90px;top:98.00px;">Microsoft Excel 11.0 Отчет по результатам</div>
<div class="t b" style="left:17.90px;top:109.00px;">Рабочий лист: [задача о красках.xls]Лист1</div>
<div class="t b" style="left:17.90px;top:119.00px;letter-spacing:-0.08px;">Отчет создан: 06.06.2006 13:41:29</div>
<div class="t" style="left:17.90px;top:150.00px;">Целевая ячейка (Минимум)</div>
<div class="t" style="left:17.90px;top:202.00px;">Изменяемые ячейки</div>
<div class="t" style="left:17.90px;top:276.00px;">Ограничения</div>
<div class="t h" style="left:28.30px;top:160.00px;">Ячейка</div>
<div class="t h" style="left:43.25px;width:200px;text-align:center;top:160.00px;">Имя</div>
<div class="t h" style="left:170.00px;width:200px;text-align:center;top:160.00px;">Исходное значение</div>
<div class="t h" style="left:236.85px;width:200px;text-align:center;top:160.00px;">Результат</div>
<div class="t" style="left:28.30px;top:171.00px;">$E$2</div>
<div class="t" style="left:60.70px;top:171.00px;">Значение:</div>
<div class="t" style="left:102.30px;top:171.00px;">Значение ЦФ</div>
<div class="t" style="right:303.30px;top:171.00px;">0</div>
<div class="t" style="right:254.70px;top:171.00px;">13300</div>
<div class="t h" style="left:28.30px;top:213.00px;">Ячейка</div>
<div class="t h" style="left:43.25px;width:200px;text-align:center;top:213.00px;">Имя</div>
<div class="t h" style="left:170.00px;width:200px;text-align:center;top:213.00px;">Исходное значение</div>
<div class="t h" style="left:236.85px;width:200px;text-align:center;top:213.00px;">Результат</div>
<div class="t" style="left:28.30px;top:223.00px;">$B$2</div>
<div class="t" style="left:60.70px;top:223.00px;">Значение:</div>
<div class="t" style="left:128.30px;top:223.00px;">y1</div>
<div class="t" style="right:303.30px;top:223.00px;">0</div>
<div class="t" style="right:254.70px;top:223.00px;">70</div>
<div class="t" style="left:28.30px;top:234.00px;">$C$2</div>
<div class="t" style="left:60.70px;top:234.00px;">Значение:</div>
<div class="t" style="left:128.30px;top:234.00px;">y2</div>
<div class="t" style="right:303.30px;top:234.00px;">0</div>
<div class="t" style="right:254.70px;top:234.00px;">90</div>
<div class="t" style="left:28.30px;top:244.00px;">$D$2</div>
<div class="t" style="left:60.70px;top:244.00px;">Значение:</div>
<div class="t" style="left:128.30px;top:244.00px;">y3</div>
<div class="t" style="right:303.30px;top:244.00px;">0</div>
<div class="t" style="right:254.70px;top:244.00px;">0</div>
<div class="t h" style="left:28.30px;top:286.00px;">Ячейка</div>
<div class="t h" style="left:43.25px;width:200px;text-align:center;top:286.00px;">Имя</div>
<div class="t h" style="left:170.00px;width:200px;text-align:center;top:286.00px;">Значение</div>
<div class="t h" style="left:236.85px;width:200px;text-align:center;top:286.00px;">Формула</div>
<div class="t h" style="left:282.50px;width:200px;text-align:center;top:286.00px;">Статус</div>
<div class="t h" style="left:322.50px;width:200px;text-align:center;top:286.00px;">Разница</div>
<div class="t" style="left:28.30px;top:297.00px;">$E$6</div>
<div class="t" style="left:60.70px;top:297.00px;">второе неравенство: Значение ограничений</div>
<div class="t" style="right:303.30px;top:297.00px;">230</div>
<div class="t" style="left:314.30px;top:297.00px;">$E$6&gt;=$F$6</div>
<div class="t" style="left:363.30px;top:297.00px;">связанное</div>
<div class="t" style="right:174.00px;top:297.00px;">0</div>
<div class="t" style="left:28.30px;top:307.00px;">$E$5</div>
<div class="t" style="left:60.70px;top:307.00px;">первое неравенство: Значение ограничений</div>
<div class="t" style="right:303.30px;top:307.00px;">250</div>
<div class="t" style="left:314.30px;top:307.00px;">$E$5&gt;=$F$5</div>
<div class="t" style="left:363.30px;top:307.00px;">связанное</div>
<div class="t" style="right:174.00px;top:307.00px;">0</div>
<div class="t" style="left:28.30px;top:318.00px;">$B$2</div>
<div class="t" style="left:60.70px;top:318.00px;">Значение:</div>
<div class="t" style="left:128.30px;top:318.00px;">y1</div>
<div class="t" style="right:303.30px;top:318.00px;">70</div>
<div class="t" style="left:314.30px;top:318.00px;">$B$2&gt;=0</div>
<div class="t" style="left:363.30px;top:318.00px;">не связан.</div>
<div class="t" style="right:174.00px;top:318.00px;">70</div>
<div class="t" style="left:28.30px;top:328.00px;">$C$2</div>
<div class="t" style="left:60.70px;top:328.00px;">Значение:</div>
<div class="t" style="left:128.30px;top:328.00px;">y2</div>
<div class="t" style="right:303.30px;top:328.00px;">90</div>
<div class="t" style="left:314.30px;top:328.00px;">$C$2&gt;=0</div>
<div class="t" style="left:363.30px;top:328.00px;">не связан.</div>
<div class="t" style="right:174.00px;top:328.00px;">90</div>
<div class="t" style="left:28.30px;top:338.00px;">$D$2</div>
<div class="t" style="left:60.70px;top:338.00px;">Значение:</div>
<div class="t" style="left:128.30px;top:338.00px;">y3</div>
<div class="t" style="right:303.30px;top:338.00px;">0</div>
<div class="t" style="left:314.30px;top:338.00px;">$D$2&gt;=0</div>
<div class="t" style="left:363.30px;top:338.00px;">связанное</div>
<div class="t" style="right:174.00px;top:338.00px;">0</div>
<svg style="left:0;top:0" width="614" height="461" viewBox="0 0 614 461"><rect x="0.00" y="86.75" width="603.00" height="0.90" fill="#9a9786"/><rect x="0.00" y="96.95" width="603.00" height="0.90" fill="#a19e8d"/><rect x="0.00" y="87.75" width="603.00" height="0.70" fill="#fbfaf5"/><rect x="16.05" y="87.80" width="0.90" height="9.20" fill="#a19e8d"/><rect x="25.15" y="87.80" width="0.90" height="9.20" fill="#a19e8d"/><rect x="17.05" y="88.40" width="0.70" height="8.40" fill="#fbfaf5"/><rect x="57.65" y="87.80" width="0.90" height="9.20" fill="#a19e8d"/><rect x="26.15" y="88.40" width="0.70" height="8.40" fill="#fbfaf5"/><rect x="227.15" y="87.80" width="0.90" height="9.20" fill="#a19e8d"/><rect x="58.65" y="88.40" width="0.70" height="8.40" fill="#fbfaf5"/><rect x="311.15" y="87.80" width="0.90" height="9.20" fill="#a19e8d"/><rect x="228.15" y="88.40" width="0.70" height="8.40" fill="#fbfaf5"/><rect x="360.85" y="87.80" width="0.90" height="9.20" fill="#a19e8d"/><rect x="312.15" y="88.40" width="0.70" height="8.40" fill="#fbfaf5"/><rect x="402.45" y="87.80" width="0.90" height="9.20" fill="#a19e8d"/><rect x="361.85" y="88.40" width="0.70" height="8.40" fill="#fbfaf5"/><rect x="440.85" y="87.80" width="0.90" height="9.20" fill="#a19e8d"/><rect x="403.45" y="88.40" width="0.70" height="8.40" fill="#fbfaf5"/><rect x="479.25" y="87.80" width="0.90" height="9.20" fill="#a19e8d"/><rect x="441.85" y="88.40" width="0.70" height="8.40" fill="#fbfaf5"/><rect x="517.65" y="87.80" width="0.90" height="9.20" fill="#a19e8d"/><rect x="480.25" y="88.40" width="0.70" height="8.40" fill="#fbfaf5"/><rect x="556.05" y="87.80" width="0.90" height="9.20" fill="#a19e8d"/><rect x="518.65" y="88.40" width="0.70" height="8.40" fill="#fbfaf5"/><rect x="594.45" y="87.80" width="0.90" height="9.20" fill="#a19e8d"/><rect x="557.05" y="88.40" width="0.70" height="8.40" fill="#fbfaf5"/><rect x="602.15" y="87.80" width="0.90" height="9.20" fill="#a19e8d"/><rect x="595.45" y="88.40" width="0.70" height="8.40" fill="#fbfaf5"/><rect x="0.00" y="75.60" width="0.90" height="338.40" fill="#9d9a8a"/><rect x="0.00" y="75.60" width="66.00" height="0.80" fill="#a5a292"/><rect x="110.00" y="75.60" width="504.00" height="0.80" fill="#b5b2a2"/><rect x="25.70" y="158.54" width="336.00" height="1.50" fill="#7d7d7d"/><rect x="25.70" y="169.58" width="336.00" height="0.90" fill="#7d7d7d"/><rect x="25.70" y="179.29" width="336.00" height="1.50" fill="#7d7d7d"/><rect x="25.70" y="210.71" width="336.00" height="1.50" fill="#7d7d7d"/><rect x="25.70" y="221.93" width="336.00" height="0.90" fill="#7d7d7d"/><rect x="25.70" y="232.54" width="336.00" height="0.80" fill="#b9b9b9"/><rect x="25.70" y="243.10" width="336.00" height="0.80" fill="#b9b9b9"/><rect x="25.70" y="252.91" width="336.00" height="1.50" fill="#7d7d7d"/><rect x="25.70" y="284.54" width="416.00" height="1.50" fill="#7d7d7d"/><rect x="25.70" y="295.76" width="416.00" height="0.90" fill="#7d7d7d"/><rect x="25.70" y="306.34" width="416.00" height="0.80" fill="#b9b9b9"/><rect x="25.70" y="316.65" width="416.00" height="0.80" fill="#b9b9b9"/><rect x="25.70" y="326.75" width="416.00" height="0.80" fill="#b9b9b9"/><rect x="25.70" y="336.85" width="416.00" height="0.80" fill="#b9b9b9"/><rect x="25.70" y="346.32" width="416.00" height="1.50" fill="#7d7d7d"/></svg>
<div style="left:16.60px;top:97.20px;width:10.00px;height:10.60px;border:1.2px solid #000;"></div>
<div style="left:24.60px;top:106.20px;width:2.90px;height:2.90px;background:#fff;"></div>
<div style="left:25.10px;top:106.70px;width:2.30px;height:2.30px;background:#000;"></div>
<div style="left:603.00px;top:86.80px;width:11.00px;height:318.40px;background:#f4f3ea;"></div>
<div style="left:603.00px;top:86.40px;width:9.60px;height:5.00px;background:#ece9d8;border-top:0.8px solid #9a9786;"></div>
<div style="left:603.00px;top:89.60px;width:9.60px;height:3.00px;background:#ece9d8;border-top:0.9px solid #404040;border-bottom:0.9px solid #404040;"></div>
<div style="left:603.00px;top:92.80px;width:9.60px;height:8.40px;background:#ece9d8;border-top:0.7px solid #fff;border-left:0.7px solid #fff;border-right:0.9px solid #5c5a50;border-bottom:0.9px solid #5c5a50;"><svg style="left:0.60px;top:0.50px" width="7" height="6" viewBox="0 0 7 6"><path d="M1.2 4.2 H5.6 L3.4 1.8 Z" fill="#000"/></svg></div>
<div style="left:603.00px;top:384.30px;width:9.60px;height:10.50px;background:#808080;"></div>
<div style="left:603.00px;top:394.80px;width:9.60px;height:8.80px;background:#ece9d8;border-top:0.7px solid #fff;border-left:0.7px solid #fff;border-right:0.9px solid #5c5a50;border-bottom:0.9px solid #5c5a50;"><svg style="left:0.60px;top:0.70px" width="7" height="6" viewBox="0 0 7 6"><path d="M1.2 1.8 H5.6 L3.4 4.2 Z" fill="#000"/></svg></div>
<div style="left:612.60px;top:86.80px;width:1.40px;height:318.40px;background:#fbfbf8;"></div>
<div style="left:0.00px;top:404.30px;width:614.00px;height:9.70px;background:#ece9d8;"></div>
<div style="left:1.30px;top:405.20px;width:9.20px;height:8.60px;border-right:0.8px solid #aca899;border-bottom:0.8px solid #aca899;border-left:0.6px solid #fff;"><svg style="left:0;top:0" width="8" height="8" viewBox="0 0 8 8"><path d="M6.4 1.2 V7 L3.2 4.1 Z M2 1.2 H3.2 V7 H2 Z" fill="#000"/></svg></div>
<div style="left:10.50px;top:405.20px;width:9.20px;height:8.60px;border-right:0.8px solid #aca899;border-bottom:0.8px solid #aca899;border-left:0.6px solid #fff;"><svg style="left:0;top:0" width="8" height="8" viewBox="0 0 8 8"><path d="M6 1.2 V7 L2.6 4.1 Z" fill="#000"/></svg></div>
<div style="left:19.70px;top:405.20px;width:9.20px;height:8.60px;border-right:0.8px solid #aca899;border-bottom:0.8px solid #aca899;border-left:0.6px solid #fff;"><svg style="left:0;top:0" width="8" height="8" viewBox="0 0 8 8"><path d="M2.8 1.2 V7 L6.2 4.1 Z" fill="#000"/></svg></div>
<div style="left:28.90px;top:405.20px;width:9.20px;height:8.60px;border-right:0.8px solid #aca899;border-bottom:0.8px solid #aca899;border-left:0.6px solid #fff;"><svg style="left:0;top:0" width="8" height="8" viewBox="0 0 8 8"><path d="M2.2 1.2 V7 L5.4 4.1 Z M5.4 1.2 H6.6 V7 H5.4 Z" fill="#000"/></svg></div>
<svg style="left:0;top:404px" width="360" height="11" viewBox="0 404 360 11"><path d="M39.4 404.6 L43.8 413.6 L139.9 413.6 L143.8 404.6 Z" fill="#fff"/><path d="M39.4 404.8 L43.8 413.5 L139.9 413.5" fill="none" stroke="#000" stroke-width="0.8"/><path d="M139.9 413.5 H327" fill="none" stroke="#333" stroke-width="0.7"/><path d="M143.8 404.7 H355" fill="none" stroke="#333" stroke-width="0.7"/><path d="M139.9 413.7 L143.8 404.9 M141.1 410.9 L142.4 413.7 M237.7 413.7 L241.6 404.9 M238.9 410.9 L240.2 413.7 M267.6 413.7 L271.5 404.9 M268.8 410.9 L270.1 413.7 M297.3 413.7 L301.2 404.9 M298.5 410.9 L299.8 413.7 M326.6 413.7 L330.5 404.9 " fill="none" stroke="#000" stroke-width="0.8"/></svg>
<div class="t" style="left:44.80px;top:404.60px;font-weight:bold;font-size:7.82px;-webkit-text-stroke:0.2px #000;line-height:9px;height:9px;letter-spacing:0;transform:scaleY(1.1);transform-origin:0 60%;">Отчет по результатам 1</div>
<div class="t" style="left:147.70px;top:404.60px;font-size:7.45px;line-height:9px;height:9px;letter-spacing:0;transform:scaleY(1.1);transform-origin:0 60%;">Отчет по результатам 2</div>
<div class="t" style="left:243.60px;top:404.60px;font-size:7.45px;line-height:9px;height:9px;letter-spacing:0;transform:scaleY(1.1);transform-origin:0 60%;">Лист1</div>
<div class="t" style="left:272.90px;top:404.60px;font-size:7.45px;line-height:9px;height:9px;letter-spacing:0;transform:scaleY(1.1);transform-origin:0 60%;">Лист2</div>
<div class="t" style="left:302.50px;top:404.60px;font-size:7.45px;line-height:9px;height:9px;letter-spacing:0;transform:scaleY(1.1);transform-origin:0 60%;">Лист3</div>
<div style="left:355.20px;top:405.20px;width:1.60px;height:8.60px;background:#fff;border-left:0.8px solid #808080;border-right:0.6px solid #404040;"></div>
<div style="left:357.80px;top:405.20px;width:9.20px;height:8.60px;background:#ece9d8;border-top:0.7px solid #fff;border-left:0.7px solid #fff;border-right:0.9px solid #5c5a50;border-bottom:0.9px solid #5c5a50;"><svg style="left:0.40px;top:0.60px" width="7" height="6" viewBox="0 0 7 6"><path d="M4.2 0.8 V5.2 L1.8 3 Z" fill="#000"/></svg></div>
<div style="left:367.00px;top:404.30px;width:236.00px;height:9.50px;background:#f3f1e6;"></div>
<div style="left:569.00px;top:405.20px;width:20.70px;height:8.60px;background:#808080;"></div>
<div style="left:589.70px;top:405.20px;width:9.80px;height:8.60px;background:#ece9d8;border-top:0.7px solid #fff;border-left:0.7px solid #fff;border-right:0.9px solid #5c5a50;border-bottom:0.9px solid #5c5a50;"><svg style="left:0.70px;top:0.60px" width="7" height="6" viewBox="0 0 7 6"><path d="M1.8 0.8 V5.2 L4.2 3 Z" fill="#000"/></svg></div>
<div style="left:600.30px;top:405.20px;width:2.30px;height:8.60px;background:#ece9d8;border-left:0.8px solid #fff;border-right:0.9px solid #404040;"></div>
<div style="left:603.00px;top:404.30px;width:11.00px;height:9.70px;background:#ece9d8;border-top:0.8px solid #aca899;border-left:0.8px solid #aca899;"></div>
<div style="left:0.00px;top:414.00px;width:614.00px;height:0.90px;background:#fff;"></div>
<div style="left:0.00px;top:415.00px;width:344.80px;height:16.40px;border-right:1px solid #c8c5b4;border-bottom:1px solid #c8c5b4;"></div>
<div style="left:3.40px;top:417.00px;width:0.90px;height:12.40px;background:#fff;border-right:0.5px solid #aca899;"></div>
<div class="m" style="left:9.00px;top:418.60px;">Де<u>й</u>ствия</div>
<svg style="left:40.40px;top:422.80px" width="4" height="2.4" viewBox="0 0 4 2.4"><path d="M0.2 0.2 H3.8 L2 2.2 Z" fill="#000"/></svg>
<svg style="left:50.40px;top:418.40px" width="6" height="10" viewBox="0 0 6 10"><path d="M0.6 0.4 V8 L2.4 6.4 L3.8 9.4 L5 8.8 L3.6 6 H5.8 Z" fill="#fff" stroke="#111" stroke-width="0.7"/></svg>
<svg style="left:62.60px;top:418.60px" width="8.6" height="9.6" viewBox="0 0 8.6 9.6"><circle cx="4.3" cy="5.2" r="3.6" fill="none" stroke="#b3b0a0" stroke-width="0.9"/><path d="M4.3 0.4 V3.6 M3 2 L4.3 0.4 L5.6 2" fill="none" stroke="#b3b0a0" stroke-width="0.8"/><circle cx="4.3" cy="5.2" r="0.8" fill="#b3b0a0"/></svg>
<div style="left:74.70px;top:417.40px;width:1.40px;height:12.60px;background:#aca899;border-right:0.7px solid #fff;"></div>
<div class="m" style="left:80.60px;top:418.60px;">Автофи<u>г</u>уры</div>
<svg style="left:121.40px;top:422.80px" width="4" height="2.4" viewBox="0 0 4 2.4"><path d="M0.2 0.2 H3.8 L2 2.2 Z" fill="#000"/></svg>
<svg style="left:130.00px;top:419.00px" width="8" height="8.6" viewBox="0 0 8 8.6"><path d="M0.6 0.6 L7.2 8" stroke="#333" stroke-width="0.8"/></svg>
<svg style="left:144.00px;top:419.00px" width="8" height="8.6" viewBox="0 0 8 8.6"><path d="M0.6 0.6 L6 6.6" stroke="#111" stroke-width="1"/><path d="M7.4 8.2 L3.8 6.6 L6.2 4.4 Z" fill="#111"/></svg>
<svg style="left:157.00px;top:418.80px" width="10.4" height="8.6" viewBox="0 0 10.4 8.6"><rect x="0.5" y="0.5" width="9.4" height="7.6" fill="none" stroke="#111" stroke-width="0.9"/></svg>
<svg style="left:170.60px;top:419.20px" width="10.4" height="7.4" viewBox="0 0 10.4 7.4"><ellipse cx="5.2" cy="3.7" rx="4.7" ry="3.2" fill="none" stroke="#111" stroke-width="0.9"/></svg>
<svg style="left:184.60px;top:418.40px" width="9.6" height="10" viewBox="0 0 9.6 10"><rect x="0.5" y="0.5" width="8.6" height="9" fill="#bbb" stroke="#111" stroke-width="0.9"/><rect x="2" y="1.8" width="5.6" height="3.4" fill="#fff" stroke="#333" stroke-width="0.4"/><path d="M1.6 6.6 H7.8 M1.6 8 H7.8" stroke="#555" stroke-width="0.6"/></svg>
<svg style="left:198.60px;top:418.40px" width="10" height="10.4" viewBox="0 0 10 10.4"><path d="M0.4 9.2 L5.8 0.6 L7 0.6 L7 9.2 L5.2 9.2 L5.2 7.4 L2.8 7.4 L1.8 9.2 Z" fill="#12a" stroke="#003" stroke-width="0.3"/><path d="M8.2 0.6 V9.4" stroke="#666" stroke-width="1.2"/></svg>
<div style="left:211.10px;top:417.40px;width:1.40px;height:12.60px;background:#aca899;border-right:0.7px solid #fff;"></div>
<svg style="left:216.00px;top:417.80px" width="10" height="11.2" viewBox="0 0 10 11.2"><path d="M2.4 3.6 L5.2 1.4 L8 4.2 L4.8 6.8 Z" fill="#fff" stroke="#222" stroke-width="0.7"/><path d="M3.4 1.4 C3.4 0 5.4 0 5.2 2" fill="none" stroke="#222" stroke-width="0.6"/><path d="M7.8 4.2 C9 4.6 9 6.2 8.6 7.2 C8 6.4 7.4 5.4 7.8 4.2Z" fill="#00a"/><rect x="0.2" y="8.4" width="9.6" height="2.4" fill="#ff0"/></svg>
<svg style="left:228.60px;top:422.80px" width="4" height="2.4" viewBox="0 0 4 2.4"><path d="M0.2 0.2 H3.8 L2 2.2 Z" fill="#000"/></svg>
<svg style="left:236.00px;top:417.80px" width="10" height="11.2" viewBox="0 0 10 11.2"><path d="M2 7.4 L3 5 L8.2 0.6 L9.4 1.8 L4.4 6.6 Z" fill="#cc3" stroke="#224" stroke-width="0.6"/><path d="M2 7.4 L3 5 L4.4 6.6 Z" fill="#00a"/><rect x="0.2" y="8.4" width="9.6" height="2.4" fill="#03f"/></svg>
<svg style="left:248.80px;top:422.80px" width="4" height="2.4" viewBox="0 0 4 2.4"><path d="M0.2 0.2 H3.8 L2 2.2 Z" fill="#000"/></svg>
<svg style="left:256.40px;top:417.80px" width="10" height="11.2" viewBox="0 0 10 11.2"><text x="5" y="7.6" font-size="9.4" font-family="Liberation Serif,serif" font-weight="bold" text-anchor="middle" fill="#114">A</text><rect x="0.2" y="8.4" width="9.6" height="2.4" fill="#f00"/></svg>
<svg style="left:269.20px;top:422.80px" width="4" height="2.4" viewBox="0 0 4 2.4"><path d="M0.2 0.2 H3.8 L2 2.2 Z" fill="#000"/></svg>
<svg style="left:277.00px;top:419.60px" width="9.6" height="7.4" viewBox="0 0 9.6 7.4"><path d="M0 0.8 H9.6 M0 3.7 H9.6 M0 6.6 H9.6" stroke="#000" stroke-width="1.3"/></svg>
<svg style="left:290.60px;top:419.60px" width="9.6" height="8" viewBox="0 0 9.6 8"><path d="M0 0.6 H9.6" stroke="#555" stroke-width="0.8"/><path d="M0 3 H9.6" stroke="#777" stroke-width="0.8" stroke-dasharray="1.2 0.8"/><path d="M0 5.4 H9.6" stroke="#777" stroke-width="1" stroke-dasharray="0.6 0.6"/><path d="M0 7.4 H9.6" stroke="#999" stroke-width="0.7"/></svg>
<svg style="left:305.40px;top:419.00px" width="9.4" height="9" viewBox="0 0 9.4 9"><path d="M0.6 2 H8.6 M0.6 6.8 H8.6" stroke="#000" stroke-width="1.1"/><path d="M9.4 2 L6.6 0.2 V3.8 Z M0 6.8 L2.8 5 V8.6 Z M0 2 h1.4 v0 M9.4 6.8 h-1" fill="#000"/><rect x="0" y="1" width="1.8" height="2" fill="#000"/><rect x="7.6" y="5.8" width="1.8" height="2" fill="#000"/></svg>
<svg style="left:319.00px;top:418.80px" width="9" height="9.4" viewBox="0 0 9 9.4"><rect x="1.8" y="1.8" width="6.6" height="7" fill="#000"/><rect x="0.5" y="0.5" width="6.6" height="7" fill="#088" stroke="#000" stroke-width="0.8"/></svg>
<svg style="left:331.40px;top:418.40px" width="10" height="10" viewBox="0 0 10 10"><path d="M0.5 3.2 L3 0.6 H9.4 V6.8 L7 9.4 H0.5 Z" fill="#ddd" stroke="#444" stroke-width="0.6"/><rect x="0.5" y="3.2" width="6.4" height="6.2" fill="#088" stroke="#033" stroke-width="0.6"/><path d="M6.9 3.2 L9.4 0.6 M6.9 3.2 H0.5" stroke="#444" stroke-width="0.5"/></svg>
<div style="left:0.00px;top:431.60px;width:614.00px;height:0.80px;background:#fff;"></div>
<div class="t" style="left:3.80px;top:434.30px;font-size:8px;line-height:9px;height:9px;letter-spacing:0;">Готово</div>
<div style="left:395.20px;top:433.60px;width:20.20px;height:8.60px;border-top:0.8px solid #aca899;border-left:0.8px solid #aca899;border-right:0.8px solid #fff;border-bottom:0.8px solid #fff;"></div>
<div style="left:417.00px;top:433.60px;width:78.00px;height:8.60px;border-top:0.8px solid #aca899;border-left:0.8px solid #aca899;border-right:0.8px solid #fff;border-bottom:0.8px solid #fff;"></div>
<div style="left:497.00px;top:433.60px;width:17.50px;height:8.60px;border-top:0.8px solid #aca899;border-left:0.8px solid #aca899;border-right:0.8px solid #fff;border-bottom:0.8px solid #fff;"></div>
<div style="left:516.00px;top:433.60px;width:20.50px;height:8.60px;border-top:0.8px solid #aca899;border-left:0.8px solid #aca899;border-right:0.8px solid #fff;border-bottom:0.8px solid #fff;"></div>
<div style="left:538.00px;top:433.60px;width:18.00px;height:8.60px;border-top:0.8px solid #aca899;border-left:0.8px solid #aca899;border-right:0.8px solid #fff;border-bottom:0.8px solid #fff;"></div>
<div style="left:557.50px;top:433.60px;width:19.50px;height:8.60px;border-top:0.8px solid #aca899;border-left:0.8px solid #aca899;border-right:0.8px solid #fff;border-bottom:0.8px solid #fff;"></div>
<div style="left:578.50px;top:433.60px;width:17.50px;height:8.60px;border-top:0.8px solid #aca899;border-left:0.8px solid #aca899;border-right:0.8px solid #fff;border-bottom:0.8px solid #fff;"></div>
<div style="left:597.50px;top:433.60px;width:16.50px;height:8.60px;border-top:0.8px solid #aca899;border-left:0.8px solid #aca899;border-right:0.8px solid #fff;border-bottom:0.8px solid #fff;"></div>
<div class="t" style="left:539.30px;top:433.60px;font-size:6.6px;line-height:9px;height:9px;">NUM</div>
<div style="left:0.00px;top:443.00px;width:614.00px;height:18.00px;background:linear-gradient(to bottom,#1f50c0 0%,#3a7cea 7%,#2a67e0 14%,#245edc 30%,#245edc 80%,#1e50c4 94%,#183f9e 100%);"></div>
<div style="left:0.00px;top:443.00px;width:58.00px;height:18.00px;background:linear-gradient(to bottom,#2f7a2f 0%,#5cb45c 10%,#3c963c 22%,#338c33 60%,#2c7c2c 100%);border-radius:0 7px 7px 0;box-shadow:1px 0 2px #173e8c;"></div>
<svg style="left:6.40px;top:445.60px" width="12" height="12" viewBox="0 0 12 12"><g transform="scale(1.1)"><path d="M1 2.2 q2 -1.4 4 -0.2 l-0.8 3.6 q-2 -1 -4 0.2 z" fill="#e5532a"/><path d="M5.8 2.2 q2 1 4.2 -0.2 l-0.8 3.6 q-2.2 1.2 -4.2 0.2 z" fill="#7cc23c"/><path d="M0 6.6 q2 -1.2 4 0 l-0.8 3.6 q-2 -1.2 -4 0 z" fill="#3a79e0"/><path d="M4.8 6.8 q2 1 4.2 -0.2 l-0.8 3.6 q-2.2 1.2 -4.2 0.2 z" fill="#f3c331"/></g></svg>
<div class="t" style="left:21.20px;top:445.80px;font-weight:bold;font-style:italic;color:#fff;font-size:9.6px;line-height:13px;height:13px;text-shadow:0.6px 0.8px 0.5px #1c4a1c;">пуск</div>
<div style="left:63.20px;top:445.40px;width:95.00px;height:13.60px;background:linear-gradient(to bottom,#5a9af6 0%,#3c80ee 12%,#3a7ce8 80%,#2f6cd6 100%);border:0.8px solid #2a62cc;border-radius:1.6px;"></div>
<div class="t" style="left:69px;top:446.6px;font-weight:bold;font-style:italic;font-size:8.6px;line-height:12px;height:12px;color:#2ee;text-shadow:0.6px 0.6px 0 #013;">W</div>
<div class="t" style="left:81.10px;top:448.00px;color:#fff;font-size:6.5px;line-height:9px;height:9px;letter-spacing:0;">Microsoft Word - Дво…</div>
<div style="left:158.80px;top:445.40px;width:95.60px;height:13.60px;background:#1c4eb4;border:0.8px solid #153c92;box-shadow:inset 0.6px 0.6px 1px #10307a;border-radius:1.6px;"></div>
<svg style="left:165.4px;top:448px" width="9.6" height="8.6" viewBox="0 0 9.6 8.6"><rect x="0" y="0.2" width="9.6" height="8" fill="#123a7a"/><path d="M6.6 0.6 H9.2 L3 8 H0.4 Z" fill="#0a5c52"/><path d="M0.4 0.6 H3 L9.2 8 H6.6 Z" fill="#5eeadc"/></svg>
<div class="t" style="left:176.70px;top:448.00px;color:#fff;font-size:6.5px;line-height:9px;height:9px;letter-spacing:0;">Microsoft Excel - зад…</div>
<div style="left:255.00px;top:445.40px;width:94.60px;height:13.60px;background:linear-gradient(to bottom,#5a9af6 0%,#3c80ee 12%,#3a7ce8 80%,#2f6cd6 100%);border:0.8px solid #2a62cc;border-radius:1.6px;"></div>
<svg style="left:261.2px;top:446.8px" width="9" height="11" viewBox="0 0 9 11"><path d="M1.6 4.4 H7.4 L6.8 10.4 H2.2 Z" fill="#d9b36a" stroke="#642" stroke-width="0.5"/><path d="M2.4 4.4 L1.6 0.6 M4.4 4.4 V0.4 M6.4 4.4 L7.4 0.8" stroke="#d22" stroke-width="1"/><path d="M3.4 4.4 L3 1.2" stroke="#2a2" stroke-width="0.9"/><path d="M5.4 4.4 L5.8 1" stroke="#24d" stroke-width="0.9"/></svg>
<div class="t" style="left:272.90px;top:448.00px;color:#fff;font-size:6.5px;line-height:9px;height:9px;letter-spacing:0;">Безымянный - Paint</div>
<div class="t" style="left:559.00px;top:448.00px;color:#fff;font-size:7.2px;line-height:9px;height:9px;letter-spacing:0;">EN</div>
<div style="left:580.00px;top:443.00px;width:34.00px;height:18.00px;background:linear-gradient(to bottom,#0f8ad8 0%,#2aa6f0 8%,#18a0ec 20%,#1296e4 80%,#0d7fc8 100%);border-left:0.8px solid #0a4fa8;"></div>
<svg style="left:575.40px;top:446.40px" width="11" height="11" viewBox="0 0 11 11"><circle cx="5.5" cy="5.5" r="5" fill="#2f7fe8" stroke="#bfe0ff" stroke-width="0.7"/><path d="M6.6 3 L4 5.5 L6.6 8" fill="none" stroke="#fff" stroke-width="1.3"/></svg>
<div class="t" style="left:588.80px;top:448.00px;color:#fff;font-size:7.2px;line-height:9px;height:9px;letter-spacing:-0.1px;">14:11</div>
</div>
</body></html>
